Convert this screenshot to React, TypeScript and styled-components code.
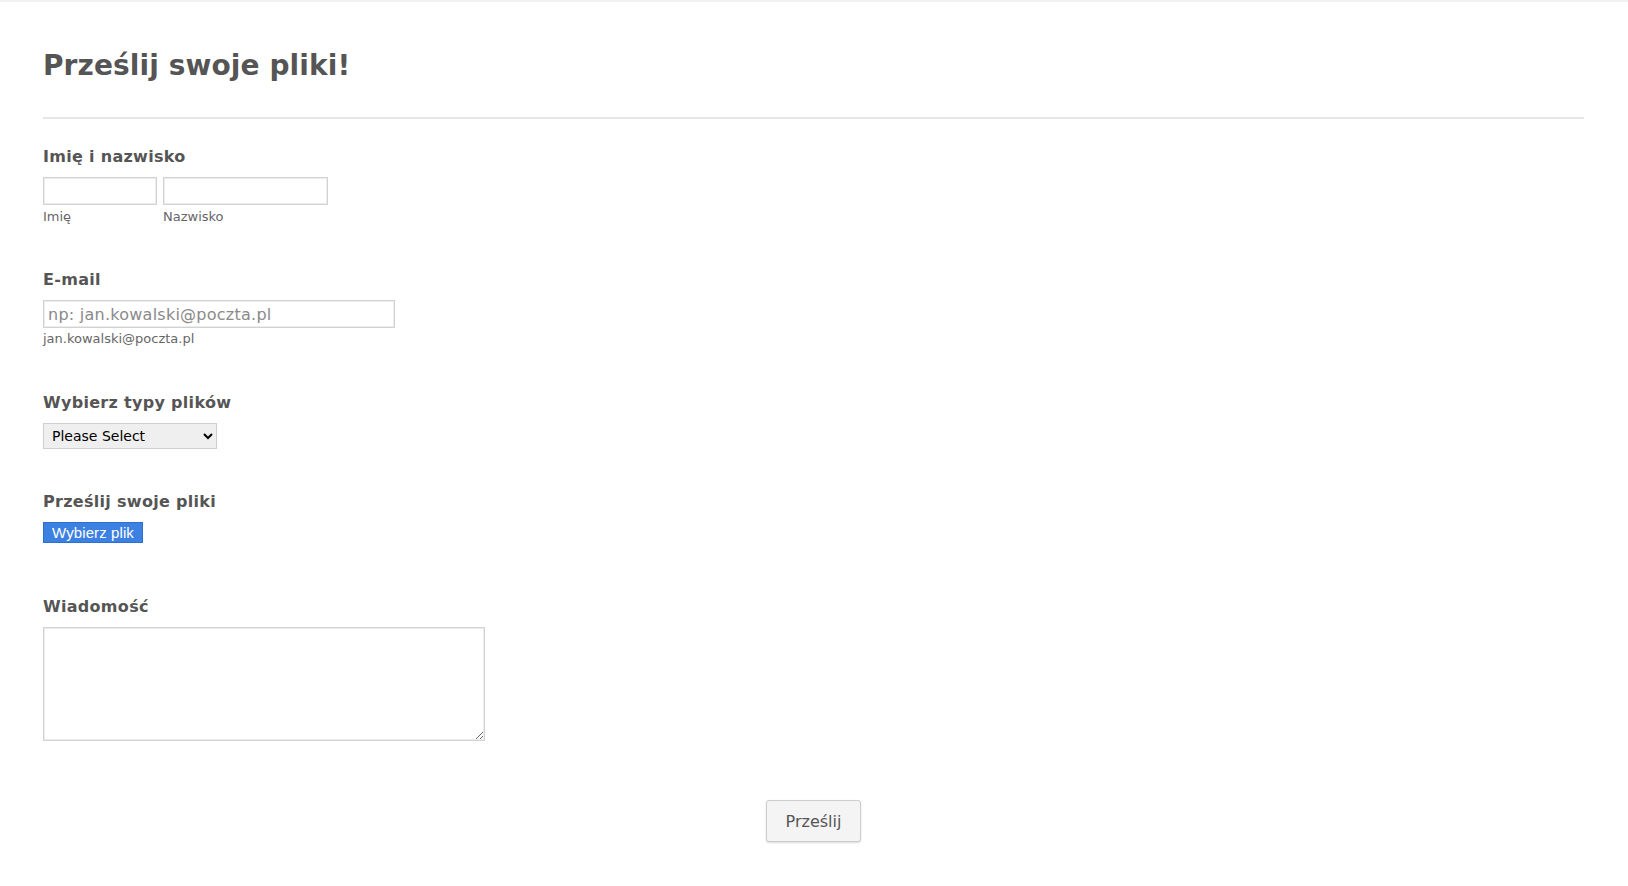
import React from 'react';
import styled, { createGlobalStyle } from 'styled-components';

const GlobalStyle = createGlobalStyle`
  * { box-sizing: border-box; }
  html, body { margin: 0; padding: 0; background: #ffffff; }
  body {
    font-family: "DejaVu Sans", Verdana, sans-serif;
    color: #555555;
  }
`;

const Page = styled.div`
  min-height: 886px;
  border-top: 2px solid #f1f1f1;
  padding: 0 44px 0 43px;
`;

const Header = styled.header`
  padding-top: 47px;
  padding-bottom: 34px;
  border-bottom: 2px solid #e6e6e6;
`;

const Title = styled.h1`
  margin: 0;
  font-size: 28px;
  line-height: 34px;
  font-weight: 700;
  letter-spacing: 0.1px;
  color: #555555;
`;

const Form = styled.form`
  padding-top: 28px;
  display: flex;
  flex-direction: column;
`;

const Field = styled.div<{ $after: number }>`
  display: flex;
  flex-direction: column;
  align-items: flex-start;
  margin-bottom: ${p => p.$after}px;
`;

const Label = styled.label`
  font-size: 16px;
  line-height: 20px;
  font-weight: 700;
  letter-spacing: 0.3px;
  color: #555555;
  margin-bottom: 10px;
`;

const Row = styled.div`
  display: flex;
  gap: 6px;
`;

const Part = styled.div`
  display: flex;
  flex-direction: column;
`;

const TextInput = styled.input<{ $width: number }>`
  width: ${p => p.$width}px;
  height: 28px;
  margin: 0;
  padding: 0 4px;
  border: 1px solid #d2d2d2;
  box-shadow: inset 0 0 0 1px #ececec;
  background: #ffffff;
  font-family: "DejaVu Sans", Verdana, sans-serif;
  font-size: 16px;
  letter-spacing: 0.25px;
  color: #555555;
  outline: none;

  &::placeholder {
    color: #8a8a8a;
  }
`;

const SubLabel = styled.span<{ $top: number }>`
  margin-top: ${p => p.$top}px;
  font-size: 13px;
  line-height: 16px;
  color: #666666;
`;

const Select = styled.select`
  width: 174px;
  height: 26px;
  margin: 0;
  padding: 0 4px;
  border: 1px solid #cfcfcf;
  border-radius: 0;
  background-color: #efefef;
  font-family: "DejaVu Sans", Verdana, sans-serif;
  font-size: 14px;
  color: #000000;
`;

const FileButton = styled.button`
  height: 21px;
  width: 100px;
  margin: 0;
  padding: 0;
  border: 1px solid #2f6fd0;
  border-radius: 0;
  background: #3c80e2;
  color: #ffffff;
  font-family: "Liberation Sans", Arial, sans-serif;
  font-size: 15px;
  line-height: 19px;
  letter-spacing: 0.1px;
  cursor: pointer;
`;

const TextArea = styled.textarea`
  width: 442px;
  height: 114px;
  margin: 0;
  padding: 5px;
  border: 1px solid #d2d2d2;
  box-shadow: inset 0 0 0 1px #ececec;
  font-family: "DejaVu Sans", Verdana, sans-serif;
  font-size: 14px;
  color: #555555;
  outline: none;
`;

const Actions = styled.div`
  display: flex;
  justify-content: center;
`;

const SubmitButton = styled.button`
  width: 95px;
  height: 42px;
  margin: 0;
  border: 1px solid #cdcdcd;
  border-radius: 3px;
  background: #f4f4f4;
  box-shadow: 0 1px 2px rgba(0, 0, 0, 0.15);
  font-family: "DejaVu Sans", Verdana, sans-serif;
  font-size: 16px;
  color: #555555;
  cursor: pointer;
`;

export default function App() {
  return (
    <>
      <GlobalStyle />
      <Page>
        <Header>
          <Title>Prześlij swoje pliki!</Title>
        </Header>

        <Form onSubmit={e => e.preventDefault()}>
          <Field $after={45}>
            <Label>Imię i nazwisko</Label>
            <Row>
              <Part>
                <TextInput $width={114} type="text" />
                <SubLabel $top={4}>Imię</SubLabel>
              </Part>
              <Part>
                <TextInput $width={165} type="text" />
                <SubLabel $top={4}>Nazwisko</SubLabel>
              </Part>
            </Row>
          </Field>

          <Field $after={46}>
            <Label>E-mail</Label>
            <TextInput $width={352} type="email" placeholder="np: jan.kowalski@poczta.pl" />
            <SubLabel $top={3}>jan.kowalski@poczta.pl</SubLabel>
          </Field>

          <Field $after={43}>
            <Label>Wybierz typy plików</Label>
            <Select defaultValue="">
              <option value="">Please Select</option>
              <option value="img">Obrazy</option>
              <option value="doc">Dokumenty</option>
            </Select>
          </Field>

          <Field $after={54}>
            <Label>Prześlij swoje pliki</Label>
            <FileButton type="button">Wybierz plik</FileButton>
          </Field>

          <Field $after={59}>
            <Label>Wiadomość</Label>
            <TextArea />
          </Field>

          <Actions>
            <SubmitButton type="submit">Prześlij</SubmitButton>
          </Actions>
        </Form>
      </Page>
    </>
  );
}
